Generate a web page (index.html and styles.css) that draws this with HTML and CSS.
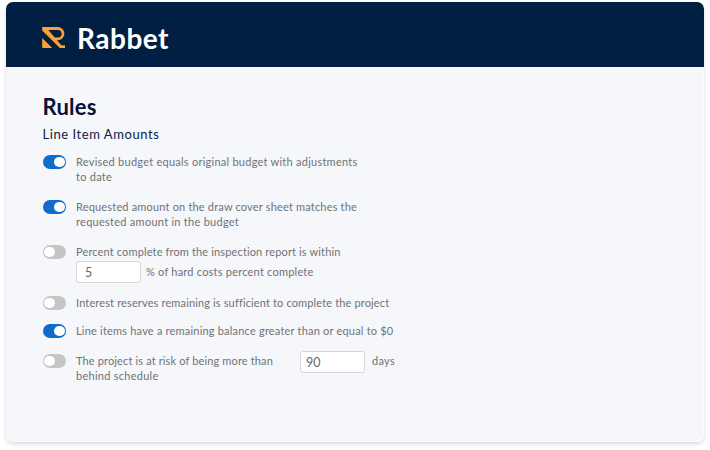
FILE: index.html
```html
<!DOCTYPE html>
<html lang="en">
<head>
  <meta charset="UTF-8" />
  <meta name="viewport" content="width=device-width, initial-scale=1.0" />
  <title>Rabbet - Rules</title>
  <link rel="stylesheet" href="styles.css">
</head>
<body>
  <div class="card">
    <header class="header">
      <svg class="logo" width="24" height="22" viewBox="0 0 24 22">
        <path d="M1 1.5H15.8a5.2 5.2 0 0 1 0 10.4H11.5" fill="none" stroke="#fba134" stroke-width="2.8" />
        <path d="M0.2 0.1H3.8L19.3 18.2H23V21H17.8L0.2 3.6Z" fill="#fba134" />
        <path d="M0.2 11V21H10.2Z" fill="#fba134" />
      </svg>
      <span class="brand">Rabbet</span>
    </header>

    <main class="content">
      <h1>Rules</h1>
      <h2>Line Item Amounts</h2>

      <div class="rule rule-budget">
        <span class="toggle on"></span>
        <p>Revised budget equals original budget with adjustments<br>to date</p>
      </div>

      <div class="rule rule-requested">
        <span class="toggle on"></span>
        <p>Requested amount on the draw cover sheet matches the<br><span class="wide">requested amount in the budget</span></p>
      </div>

      <div class="rule rule-percent">
        <span class="toggle"></span>
        <div>
          <p>Percent complete from the inspection report is within</p>
          <div class="field">
            <input type="text" value="5">
            <span>% of hard costs percent complete</span>
          </div>
        </div>
      </div>

      <div class="rule rule-interest">
        <span class="toggle"></span>
        <p>Interest reserves remaining is sufficient to complete the project</p>
      </div>

      <div class="rule rule-balance">
        <span class="toggle on"></span>
        <p>Line items have a remaining balance greater than or equal to $0</p>
      </div>

      <div class="rule rule-schedule">
        <span class="toggle"></span>
        <p>The project is at risk of being more than<br><span class="wide">behind schedule</span></p>
        <input type="text" value="90">
        <span class="days">days</span>
      </div>
    </main>
  </div>
</body>
</html>
```

FILE: styles.css
```css
:root {
  --navy: #001f42;
  --blue: #0f6dca;
  --grey: #c5c5c6;
  --text: #707276;
}

* {
  margin: 0;
  padding: 0;
  box-sizing: border-box;
}

body {
  font-family: Lato, "Liberation Sans", sans-serif;
  background: #fff;
  min-height: 450px;
  padding: 2px 6px 0;
}

.card {
  height: 440px;
  background: #f5f7fb;
  border-radius: 7px;
  box-shadow: 0 2px 4px rgba(0, 0, 0, 0.15), inset -1px -1px 0 #fdfdfe;
  overflow: hidden;
}

.header {
  display: flex;
  align-items: center;
  height: 65px;
  padding: 6px 0 0 36px;
  background: var(--navy);
}

.logo {
  margin-right: 11px;
}

.brand {
  color: #fff;
  font-size: 28px;
  line-height: 30px;
  font-weight: 700;
  letter-spacing: 0.5px;
}

.content {
  padding: 27px 0 0 36.5px;
}

h1 {
  color: #07113a;
  font-size: 22px;
  line-height: 26px;
  font-weight: 700;
  letter-spacing: 0.2px;
}

h2 {
  margin-top: 5px;
  color: #0b2347;
  font-size: 13px;
  line-height: 18px;
  font-weight: 400;
  letter-spacing: 0.56px;
}

.rule {
  display: flex;
  align-items: flex-start;
  color: var(--text);
  font-size: 11px;
  line-height: 15px;
  letter-spacing: 0.14px;
  white-space: nowrap;
}

.wide {
  letter-spacing: 0.27px;
}

.toggle {
  flex: none;
  display: flex;
  width: 23.5px;
  height: 13.5px;
  margin: 1.25px 10px 0 0;
  padding: 1.5px;
  border-radius: 7px;
  background: var(--grey);
}

.toggle::before {
  content: "";
  width: 10.5px;
  height: 10.5px;
  border-radius: 50%;
  background: #fff;
}

.toggle.on {
  justify-content: flex-end;
  background: var(--blue);
}

input {
  width: 65px;
  height: 22px;
  padding: 0 8px;
  border: 1px solid #d6d7da;
  border-radius: 3px;
  background: #fff;
  color: #66686c;
  font: 12.5px Lato, sans-serif;
}

.rule-budget {
  margin-top: 11px;
  letter-spacing: 0.25px;
}

.rule-requested,
.rule-percent {
  margin-top: 15px;
}

.rule-requested {
  letter-spacing: 0.18px;
}

.field {
  display: flex;
  align-items: center;
  gap: 5px;
  margin-top: 2px;
  letter-spacing: 0.22px;
}

.field span {
  margin-top: -1px;
}

.rule-interest {
  margin-top: 12px;
}

.rule-balance {
  margin-top: 13px;
  letter-spacing: 0.2px;
}

.rule-schedule {
  margin-top: 15px;
}

.rule-schedule p {
  width: 224px;
}

.rule-schedule input {
  margin-top: -2px;
  padding: 0 5px;
}

.days {
  margin-left: 7px;
  letter-spacing: 0.3px;
}
```
